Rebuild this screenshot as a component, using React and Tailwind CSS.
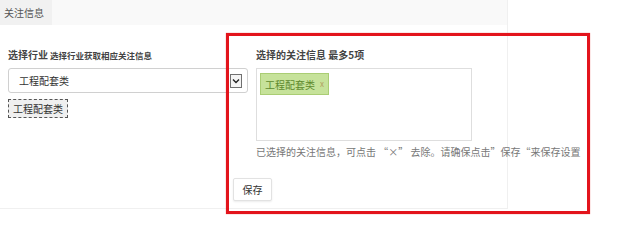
import React from "react";

export default function App() {
  return (
    <div className="relative w-[640px] h-[248px] bg-white text-[10px] text-[#333] font-['Noto_Sans_CJK_SC','Noto_Sans',sans-serif]">
      <div className="w-[508px] border-r border-b border-[#f0f0f0]">
        <div className="h-[25px] bg-[#f9f9f9] flex">
          <div className="w-[52px] bg-[#f1f1f1] pl-[4px] leading-[25px] text-[#555] text-[10px]">关注信息</div>
        </div>
        <div className="flex pl-[8px] pt-[24px]">
          <div className="w-[240px] flex flex-col items-start">
            <div className="h-[12px] leading-[12px] font-bold text-[#444] whitespace-nowrap">
              <span className="text-[10px]">选择行业</span>
              <span className="text-[8.5px] ml-[2px]">选择行业获取相应关注信息</span>
            </div>
            <div className="mt-[7px] w-[240px] h-[25px] border border-[#d0d0d0] rounded-[3px] flex items-center justify-between pl-[10px] pr-[5px]">
              <span className="text-[10px] text-[#333]">工程配套类</span>
              <div className="w-[12px] h-[14px] border border-[#707070] bg-[#f4f4f4] flex items-center justify-center">
                <svg width="8" height="6" viewBox="0 0 8 6"><path d="M1 1.5 L4 4.5 L7 1.5" fill="none" stroke="#222" strokeWidth="1.4" /></svg>
              </div>
            </div>
            <div className="mt-[6px] h-[19px] px-[4px] border border-dashed border-[#555] bg-[#efefef] leading-[17px] text-[10px] text-[#333]">工程配套类</div>
          </div>
          <div className="ml-[8px] flex flex-col items-start">
            <div className="h-[12px] leading-[12px] font-bold text-[10px] text-[#444] whitespace-nowrap">选择的关注信息 最多5项</div>
            <div className="mt-[7px] w-[216px] h-[73px] border border-[#dedede] pl-[3px] pt-[4px]">
              <div className="inline-flex items-center h-[22px] px-[4px] bg-[#c6e29a] border border-[#aacd74] text-[#5e8a2e] text-[10px]">
                工程配套类<span className="ml-[5px] text-[8px] text-[#b3a060]">x</span>
              </div>
            </div>
            <div className="mt-[5px] h-[12px] leading-[12px] text-[10px] text-[#777] whitespace-nowrap">已选择的关注信息，可点击 “×” 去除。请确保点击”保存“来保存设置</div>
          </div>
        </div>
        <div className="pl-[233px] pt-[20px] pb-[7px]">
          <div className="w-[39px] h-[23px] border border-[#e2e2e2] rounded-[2px] shadow-[0_1px_2px_rgba(0,0,0,0.08)] bg-white flex items-center justify-center text-[10px] text-[#333]">保存</div>
        </div>
      </div>
      <div className="absolute left-[226px] top-[33px] w-[364px] h-[181px] border-[3px] border-[#e3141c] shadow-[0_0_1px_rgba(227,20,28,0.6)] pointer-events-none" />
    </div>
  );
}
